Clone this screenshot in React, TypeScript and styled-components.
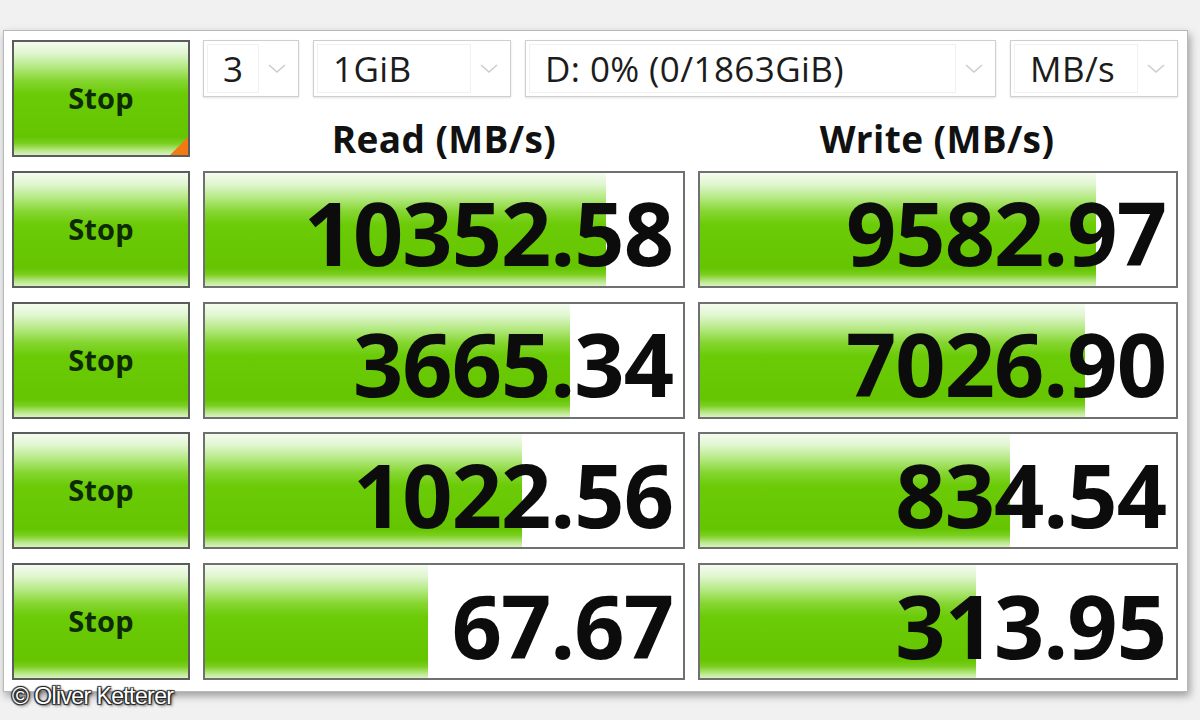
import React from "react";
import styled, { createGlobalStyle } from "styled-components";

const Global = createGlobalStyle`
  html, body { margin: 0; padding: 0; background: #f1f1f1; }
  body { width: 1200px; height: 720px; overflow: hidden; font-family: "Open Sans", "Noto Sans", sans-serif; }
`;

const Page = styled.div`
  position: relative;
  width: 1200px;
  height: 720px;
  padding: 30px 0 0 3px;
  box-sizing: border-box;
`;

const Window = styled.div`
  width: 1185px;
  height: 662px;
  box-sizing: border-box;
  background: #ffffff;
  border: 1px solid #b9b9b9;
  box-shadow: 2px 4px 8px rgba(0, 0, 0, 0.35);
  padding: 9px 10px 0 8px;
  display: grid;
  grid-template-columns: 178px 482px 480px;
  grid-template-rows: 117px repeat(4, 117px);
  column-gap: 13px;
  row-gap: 13.75px;
`;

const greenFill = `linear-gradient(to bottom,
  #f4fcef 0%, #e0f6cf 10%, #b4e982 22%, #86d632 34%, #6acb06 46%,
  #64c500 84%, #7ccf22 90%, #b9e88a 96%, #d8f3c0 100%)`;

const StopButton = styled.div`
  position: relative;
  box-sizing: border-box;
  border: 2px solid #5c5c5c;
  background: ${greenFill};
  display: flex;
  align-items: center;
  justify-content: center;
  font-family: "Open Sans", sans-serif;
  font-weight: 700;
  font-size: 29px;
  color: #0d2a05;
  letter-spacing: 0.2px;
  padding-bottom: 2px;
`;

const Corner = styled.div`
  position: absolute;
  right: 0;
  bottom: 0;
  width: 0;
  height: 0;
  border-style: solid;
  border-width: 0 0 18px 18px;
  border-color: transparent transparent #f27a12 transparent;
`;

const TopArea = styled.div`
  grid-column: 2 / 4;
  display: grid;
  grid-template-rows: 57px 1fr;
`;

const Selects = styled.div`
  display: flex;
  gap: 14px;
`;

const Select = styled.div<{ $w: number }>`
  width: ${(p) => p.$w}px;
  box-sizing: border-box;
  border: 1px solid #cfcfcf;
  box-shadow: 0 1px 2px rgba(0, 0, 0, 0.12);
  background: #fff;
  display: flex;
  align-items: stretch;
  padding: 3px;
`;

const SelectText = styled.div`
  flex: 1;
  display: flex;
  align-items: center;
  padding-left: 15px;
  font-family: "Open Sans", sans-serif;
  font-size: 35px;
  letter-spacing: 0.4px;
  color: #1c1c1c;
  border: 1px solid #f1f1f1;
  white-space: nowrap;
  overflow: hidden;
`;

const Arrow = styled.div`
  width: 36px;
  display: flex;
  align-items: center;
  justify-content: center;
`;

const Headers = styled.div`
  display: grid;
  grid-template-columns: 482px 480px;
  column-gap: 12px;
  align-items: start;
`;

const Header = styled.div`
  text-align: center;
  font-family: "Open Sans", sans-serif;
  font-weight: 700;
  font-size: 37px;
  line-height: 1.2;
  letter-spacing: 0.4px;
  color: #111;
  padding-top: 20px;
`;

const Cell = styled.div`
  position: relative;
  box-sizing: border-box;
  border: 2px solid #707070;
  background: #fff;
  display: flex;
  align-items: center;
  justify-content: flex-end;
  padding-right: 10px;
  overflow: hidden;
`;

const Bar = styled.div`
  position: absolute;
  left: 0;
  top: 0;
  bottom: 0;
  background: ${greenFill};
`;

const Value = styled.div`
  position: relative;
  font-family: "Open Sans", sans-serif;
  font-weight: 700;
  font-size: 88px;
  line-height: 1;
  color: #0c0c0c;
  letter-spacing: -1px;
  padding-top: 6px;
`;

const Copyright = styled.div`
  position: absolute;
  left: 12px;
  top: 683px;
  font-family: "Liberation Sans", Arial, sans-serif;
  font-size: 23px;
  color: #ffffff;
  letter-spacing: -0.6px;
  text-shadow: 1px 1px 1px #222, -1px -1px 1px #222, 1px -1px 1px #222, -1px 1px 1px #222, 2px 2px 3px rgba(0,0,0,0.6);
`;

const Chevron = () => (
  <svg width="18" height="10" viewBox="0 0 18 10">
    <path d="M1 1 L9 8 L17 1" fill="none" stroke="#cccccc" strokeWidth="1.5" />
  </svg>
);

const rows = [
  { r: "10352.58", rw: 0.838, w: "9582.97", ww: 0.832 },
  { r: "3665.34", rw: 0.763, w: "7026.90", ww: 0.808 },
  { r: "1022.56", rw: 0.664, w: "834.54", ww: 0.652 },
  { r: "67.67", rw: 0.467, w: "313.95", ww: 0.579 },
];

export default function App() {
  return (
    <>
      <Global />
      <Page>
        <Window>
          <StopButton>
            Stop
            <Corner />
          </StopButton>
          <TopArea>
            <Selects>
              <Select $w={96}>
                <SelectText>3</SelectText>
                <Arrow><Chevron /></Arrow>
              </Select>
              <Select $w={198}>
                <SelectText>1GiB</SelectText>
                <Arrow><Chevron /></Arrow>
              </Select>
              <Select $w={471}>
                <SelectText>D: 0% (0/1863GiB)</SelectText>
                <Arrow><Chevron /></Arrow>
              </Select>
              <Select $w={168}>
                <SelectText>MB/s</SelectText>
                <Arrow><Chevron /></Arrow>
              </Select>
            </Selects>
            <Headers>
              <Header>Read (MB/s)</Header>
              <Header>Write (MB/s)</Header>
            </Headers>
          </TopArea>
          {rows.map((row, i) => (
            <React.Fragment key={i}>
              <StopButton>Stop</StopButton>
              <Cell>
                <Bar style={{ width: `${row.rw * 100}%` }} />
                <Value>{row.r}</Value>
              </Cell>
              <Cell>
                <Bar style={{ width: `${row.ww * 100}%` }} />
                <Value>{row.w}</Value>
              </Cell>
            </React.Fragment>
          ))}
        </Window>
        <Copyright>© Oliver Ketterer</Copyright>
      </Page>
    </>
  );
}
